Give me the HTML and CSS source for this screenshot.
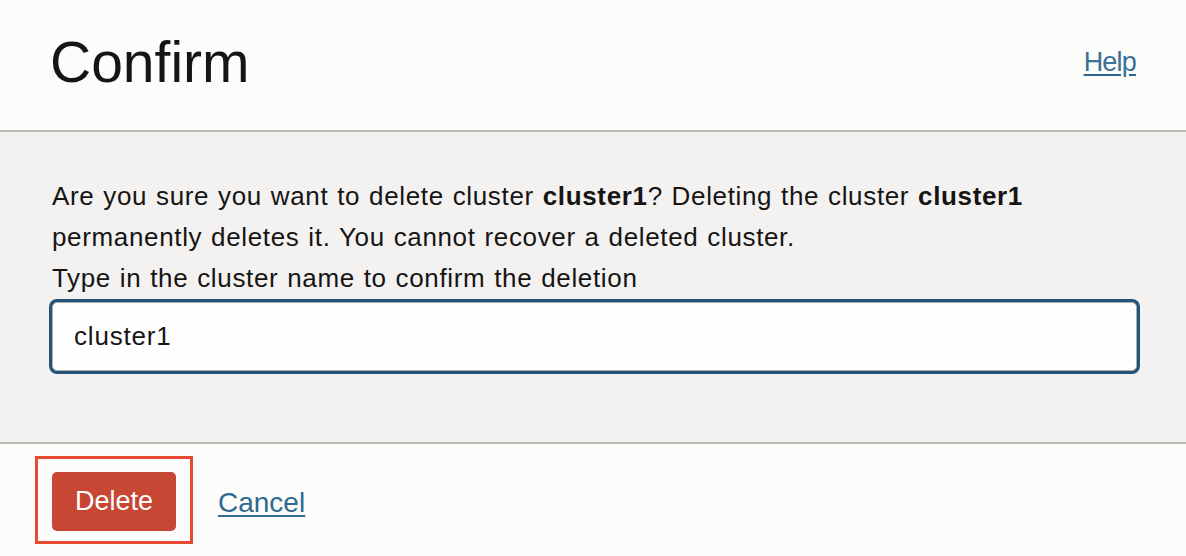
FILE: index.html
```html
<!DOCTYPE html>
<html lang="en">
<head>
<meta charset="utf-8">
<title>Confirm</title>
<link rel="stylesheet" href="styles.css">
</head>
<body>
<div class="dialog">
  <header class="dialog-header">
    <h1 class="dialog-title">Confirm</h1>
    <a class="help-link" href="#">Help</a>
  </header>
  <section class="dialog-body">
    <p class="message">Are you sure you want to delete cluster <b>cluster1</b>? Deleting the cluster <b>cluster1</b> permanently deletes it. You cannot recover a deleted cluster.<br>Type in the cluster name to confirm the deletion</p>
    <input class="name-input" type="text" value="cluster1" aria-label="Cluster name">
  </section>
  <footer class="dialog-footer">
    <span class="highlight"><button class="btn-delete" type="button">Delete</button></span>
    <a class="cancel-link" href="#">Cancel</a>
  </footer>
</div>
</body>
</html>
```
FILE: styles.css
```css
html, body {
  margin: 0;
  padding: 0;
}
body {
  background: #fcfcfb;
  font-family: "Liberation Sans", Arial, Helvetica, sans-serif;
  color: #161513;
}
.dialog {
  display: flex;
  flex-direction: column;
  height: 556px;
}
.dialog-header {
  display: flex;
  justify-content: space-between;
  align-items: flex-start;
  height: 100px;
  padding: 30px 50px 0 50px;
  border-bottom: 2px solid #bcb8b4;
  background: #fcfcfb;
}
.dialog-title {
  margin: 0;
  font-size: 57px;
  font-weight: 400;
  line-height: 64px;
  color: #161513;
}
.help-link {
  margin-top: 17px;
  font-size: 27px;
  line-height: 31px;
  letter-spacing: -0.8px;
  color: #3a7196;
  text-decoration-color: #2c6690;
  text-underline-offset: 3px;
}
.dialog-body {
  background: #f3f2f1;
  padding: 44px 50px 71px 52px;
  border-bottom: 2px solid #bcb8b4;
}
.message {
  margin: 0 0 1px 0;
  font-size: 26px;
  line-height: 41px;
  letter-spacing: 0.65px;
  word-spacing: 1px;
}
.message b {
  font-weight: 700;
}
.name-input {
  display: block;
  box-sizing: border-box;
  width: calc(100% + 1px);
  height: 69px;
  margin: 3px 0 0 0;
  padding: 0 21px;
  font-family: "Liberation Sans", Arial, Helvetica, sans-serif;
  font-size: 26px;
  letter-spacing: 0.8px;
  color: #161513;
  background: #fefefe;
  border: 1px solid #b0aba6;
  border-radius: 5px;
  box-shadow: 0 0 0 3px #235479;
  outline: none;
}
.dialog-footer {
  flex: 1;
  display: flex;
  align-items: flex-start;
  padding: 12px 0 0 35px;
  background: #fcfcfb;
}
.highlight {
  display: inline-flex;
  padding: 13px 14px 10px 14px;
  border: 3px solid #e64b31;
}
.btn-delete {
  width: 124px;
  height: 59px;
  padding: 0;
  border: none;
  border-radius: 5px;
  background: #c74634;
  color: #ffffff;
  font-family: "Liberation Sans", Arial, Helvetica, sans-serif;
  font-size: 27px;
  cursor: pointer;
}
.cancel-link {
  margin: 31px 0 0 25px;
  font-size: 28px;
  line-height: 31px;
  color: #2f6a8f;
  text-underline-offset: 3px;
}
```
